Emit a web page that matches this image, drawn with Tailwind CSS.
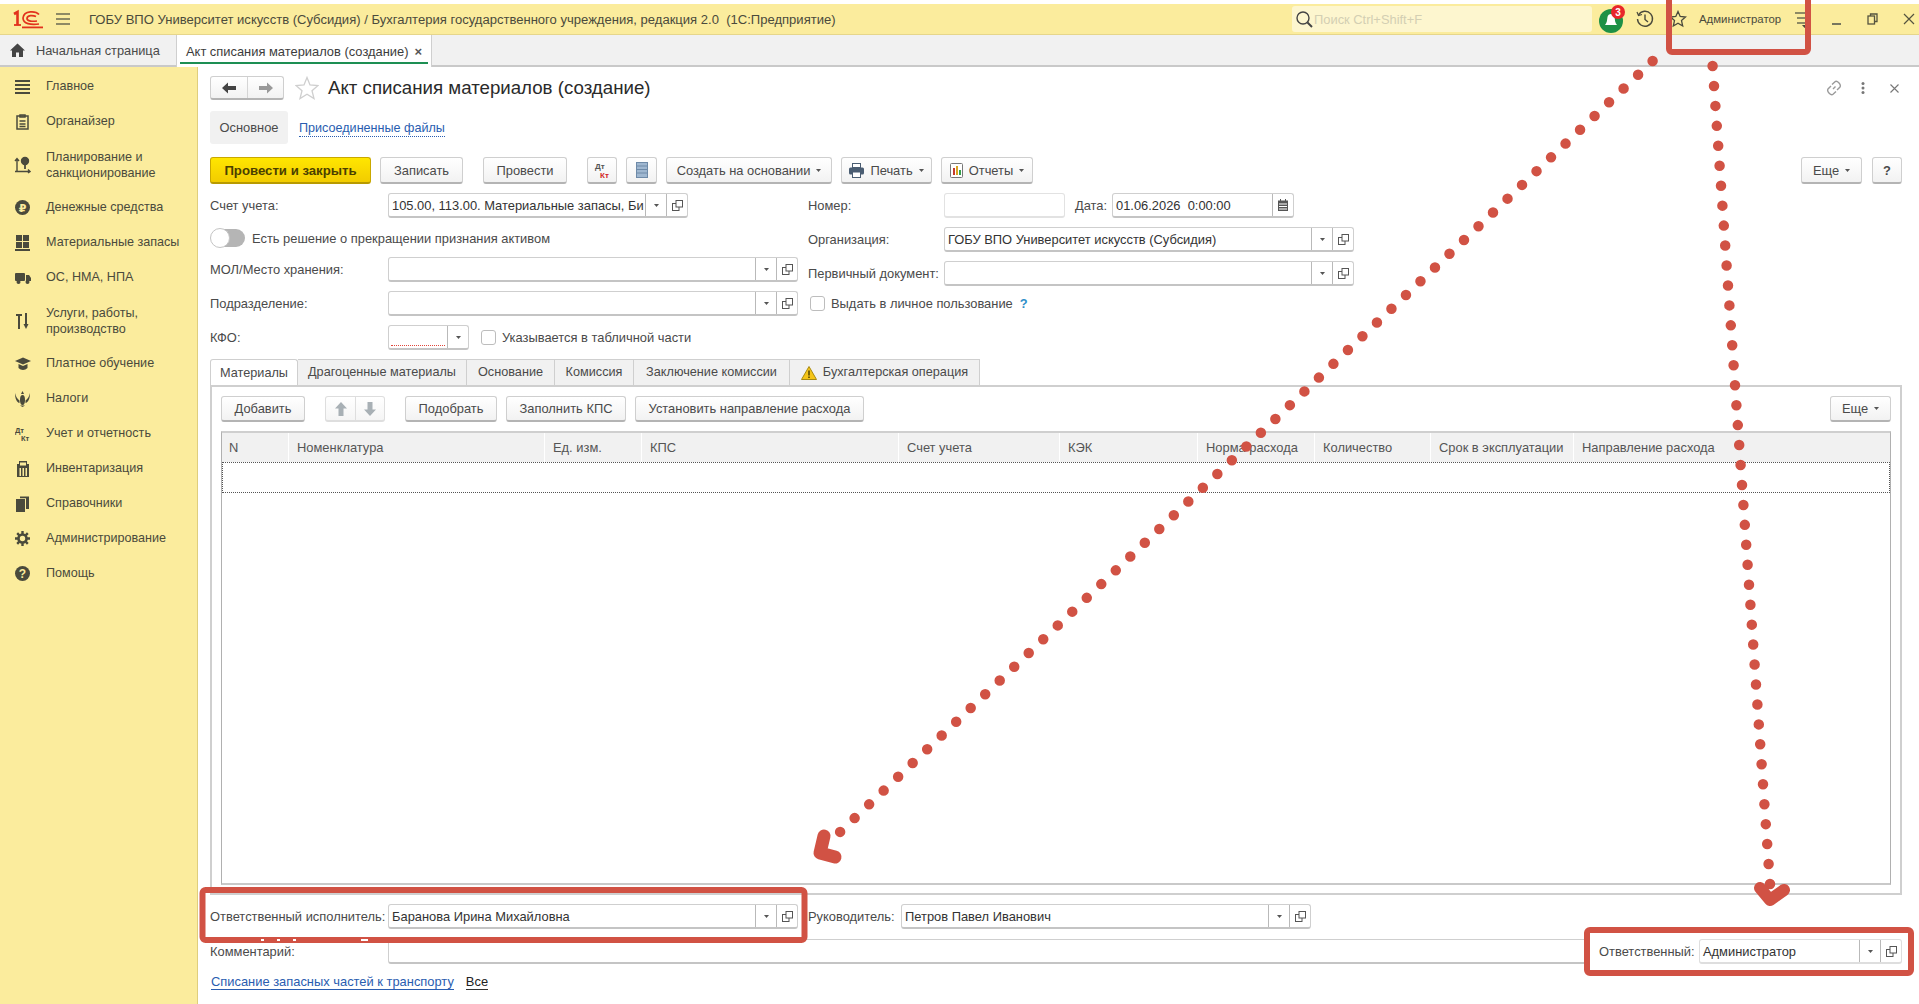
<!DOCTYPE html>
<html lang="ru"><head><meta charset="utf-8"><title>Акт списания материалов</title>
<script src="https://cdn.jsdelivr.net/npm/@tailwindcss/browser@4"></script></head>
<body class="m-0 bg-white">
<div class="relative flex h-[1004px] w-[1919px] flex-col overflow-hidden bg-white font-['Liberation_Sans',Arial,sans-serif] text-[12.9px] leading-[15px] text-[#4a4a4a]">
  <!-- top bar -->
  <div class="mt-[4px] flex h-[31px] shrink-0 items-center border-b border-[#e6d68b] bg-[#fbec9d] text-[#4a4a3c]">
    <svg class="ml-[13px] h-[20px] w-[30px]" viewBox="0 0 30 20" fill="none" stroke="#e2321d"><path d="M1 5 L4.5 3 V16" stroke-width="2.6"/><path d="M1 16 H8" stroke-width="1.8"/><path d="M26 5.5 C23 2 11 1 10 9 C10 15 18 16 26 15" stroke-width="1.7"/><path d="M23 7.5 C20 6 14 6 14 9.5 C14 12.5 20 12.5 24 12" stroke-width="1.7"/><path d="M9 18.4 H30" stroke-width="1.8"/></svg>
    <svg class="ml-[13px] h-[14px] w-[14px]" viewBox="0 0 14 14" stroke="#6b6a52" stroke-width="1.4"><path d="M0 2H14M0 7H14M0 12H14"/></svg>
    <span class="ml-[19px] w-[900px] text-[13.05px]">ГОБУ ВПО Университет искусств (Субсидия) / Бухгалтерия государственного учреждения, редакция 2.0&nbsp; (1С:Предприятие)</span>
    <div class="ml-[303px] flex h-[26px] w-[300px] items-center rounded-[3px] bg-[#fdf6cf]">
      <svg class="ml-[3px] h-[18px] w-[18px]" viewBox="0 0 18 18" fill="none" stroke="#444" stroke-width="1.4"><circle cx="8" cy="8" r="6"/><path d="M12.5 12.5L17 17" stroke-width="2"/></svg>
      <span class="ml-[1px] text-[#d3cfb3]">Поиск Ctrl+Shift+F</span>
    </div>
    <svg class="ml-[6px] h-[30px] w-[28px]" viewBox="0 0 28 30"><circle cx="13" cy="17" r="12" fill="#1d9146"/><path d="M7 21 C9 19 9 16 9.500 13 C10 9 16 9 16.500 13 C17 16 17 19 19 21 Z" fill="#fff"/><circle cx="20" cy="8" r="7" fill="#e8262a"/><text x="20" y="11.500" font-size="10" font-weight="700" fill="#fff" text-anchor="middle" font-family="Liberation Sans">3</text></svg>
    <svg class="ml-[10px] h-[18px] w-[18px]" viewBox="0 0 18 18" fill="none" stroke="#4a4a3c" stroke-width="1.4"><path d="M2.500 5 A7.500 7.500 0 1 1 1.500 9"/><path d="M1 2 L2.500 5.500 L6 4.500" stroke-width="1.2"/><path d="M9 4.500V9.500L12 12"/></svg>
    <svg class="ml-[15px] h-[18px] w-[18px]" viewBox="0 0 18 18" fill="none" stroke="#4a4a3c" stroke-width="1.3"><path d="M9 1.500L11.200 6.500L16.500 7L12.500 10.600L13.700 16L9 13.200L4.300 16L5.500 10.600L1.500 7L6.800 6.500Z"/></svg>
    <span class="ml-[12px] text-[11.4px]">Администратор</span>
    <svg class="ml-[13px] h-[18px] w-[14px]" viewBox="0 0 14 18" stroke="#6b6a52" stroke-width="1.4"><path d="M1 3H13M3 8H13M3 13H13"/><path d="M8 15H13L10.500 18Z" fill="#4a4a3c" stroke="none"/></svg>
    <span class="ml-[24px] mt-[9px] h-[2px] w-[9px] bg-[#77765e]"></span>
    <svg class="ml-[26px] h-[12px] w-[11px]" viewBox="0 0 11 12" fill="none" stroke="#55543f" stroke-width="1.300"><rect x="1" y="3" width="6.500" height="8"/><path d="M3.500 3V1H10V8.500H7.500"/></svg>
    <svg class="ml-[25px] h-[12px] w-[12px]" viewBox="0 0 12 12" stroke="#55543f" stroke-width="1.200"><path d="M1 1L11 11M11 1L1 11"/></svg>
  </div>
  <!-- open tabs -->
  <div class="flex h-[32px] shrink-0 border-b-2 border-[#c9c9c9] bg-[#f1f1f1]">
    <div class="flex w-[176px] items-center">
      <svg class="ml-[10px] h-[14px] w-[15px]" viewBox="0 0 15 14" fill="#444"><path d="M7.500 0.500L15 7.500H13V14H9V9.500H6V14H2V7.500H0Z"/></svg>
      <span class="ml-[11px] text-[12.8px]">Начальная страница</span>
    </div>
    <div class="relative flex h-[32px] w-[256px] items-center border-x border-[#cfcfcf] bg-white pl-[9px] text-[#3c3c3c]">
      <span>Акт списания материалов (создание)</span>
      <span class="ml-[6px] text-[13px] font-bold text-[#555]">×</span>
      <span class="absolute bottom-[3px] left-[3px] right-[3px] h-[2px] bg-[#1d8f53]"></span>
    </div>
  </div>
  <div class="flex min-h-0 flex-1">
    <!-- sidebar -->
    <aside class="w-[198px] shrink-0 border-r border-[#dfce7d] bg-[#fbec9d] pt-[2px] text-[12.6px] text-[#4a4a3c]">
      <div class="flex h-[35px] items-center"><div class="flex w-[46px] justify-center pr-[1px]"><svg class="h-[16px] w-[15px]" viewBox="0 0 15 16" stroke="#4a4a3c" stroke-width="2"><path d="M0 2H15M0 6H15M0 10H15M0 14H15"/></svg></div><span>Главное</span></div>
      <div class="flex h-[35px] items-center"><div class="flex w-[46px] justify-center pr-[1px]"><svg class="h-[16px] w-[13px]" viewBox="0 0 13 16" fill="none" stroke="#4a4a3c" stroke-width="1.500"><rect x="1" y="2" width="11" height="13"/><path d="M4 1H9V3H4ZM3.500 7H9.500M3.500 10H9.500M3.500 12.500H9.500"/></svg></div><span>Органайзер</span></div>
      <div class="flex h-[51px] items-center"><div class="flex w-[46px] justify-center pr-[1px]"><svg class="h-[18px] w-[17px]" viewBox="0 0 17 18" fill="none" stroke="#4a4a3c" stroke-width="1.400"><path d="M3 3V16M1 5L3 2.500L5 5M1 15.500H16M14 13.500L16 15.500L14 17"/><circle cx="11" cy="5" r="3.500" fill="#4a4a3c"/><path d="M11 8V13" stroke-width="1.800"/></svg></div><span class="leading-[16px]">Планирование и<br>санкционирование</span></div>
      <div class="flex h-[35px] items-center"><div class="flex w-[46px] justify-center pr-[1px]"><svg class="h-[15px] w-[15px]" viewBox="0 0 15 15"><circle cx="7.500" cy="7.500" r="7.500" fill="#4a4a3c"/><text x="7.500" y="11.500" font-size="11" font-weight="700" fill="#fbec9d" text-anchor="middle" font-family="DejaVu Sans">₽</text></svg></div><span>Денежные средства</span></div>
      <div class="flex h-[35px] items-center"><div class="flex w-[46px] justify-center pr-[1px]"><svg class="h-[16px] w-[15px]" viewBox="0 0 15 16" fill="#4a4a3c"><rect x="1" y="0" width="6" height="6"/><rect x="8" y="0" width="6" height="6"/><rect x="1" y="7" width="6" height="6"/><rect x="8" y="7" width="6" height="6"/><rect x="0" y="14" width="15" height="2"/></svg></div><span>Материальные запасы</span></div>
      <div class="flex h-[35px] items-center"><div class="flex w-[46px] justify-center pr-[1px]"><svg class="h-[12px] w-[16px]" viewBox="0 0 16 12" fill="#4a4a3c"><rect x="0" y="1" width="10" height="8" rx="1"/><path d="M11 3H14L16 6V9H11Z"/><circle cx="3.500" cy="10" r="2"/><circle cx="12.500" cy="10" r="2"/></svg></div><span>ОС, НМА, НПА</span></div>
      <div class="flex h-[51px] items-center"><div class="flex w-[46px] justify-center pr-[1px]"><svg class="h-[16px] w-[13px]" viewBox="0 0 13 16" fill="none" stroke="#4a4a3c" stroke-width="2"><path d="M0 2H6M3 2V16M10 0V12"/><path d="M7.500 11H12.500L10 16Z" fill="#4a4a3c" stroke="none"/></svg></div><span class="leading-[16px]">Услуги, работы,<br>производство</span></div>
      <div class="flex h-[35px] items-center"><div class="flex w-[46px] justify-center pr-[1px]"><svg class="h-[13px] w-[16px]" viewBox="0 0 16 13" fill="#4a4a3c"><path d="M0 4L8 0.500L16 4L8 7.500Z"/><path d="M3.500 7V11C6 13.500 10 13.500 12.500 11V7L8 9Z"/></svg></div><span>Платное обучение</span></div>
      <div class="flex h-[35px] items-center"><div class="flex w-[46px] justify-center pr-[1px]"><svg class="h-[16px] w-[15px]" viewBox="0 0 15 16" fill="#4a4a3c"><path d="M7.500 0L9 3H6Z"/><ellipse cx="7.500" cy="9" rx="2.500" ry="5"/><path d="M0 2C1 6 2.500 8 4.500 9.500V12C2 11.500 0 8 0 2ZM15 2C14 6 12.500 8 10.500 9.500V12C13 11.500 15 8 15 2Z"/><path d="M5 14.500H10L7.500 16Z"/></svg></div><span>Налоги</span></div>
      <div class="flex h-[35px] items-center"><div class="flex w-[46px] justify-center pr-[1px]"><svg class="h-[16px] w-[16px]" viewBox="0 0 16 16" fill="#4a4a3c" font-family="Liberation Sans" font-weight="700" font-size="7.500"><text x="0" y="7">Дт</text><text x="6" y="15">Кт</text></svg></div><span>Учет и отчетность</span></div>
      <div class="flex h-[35px] items-center"><div class="flex w-[46px] justify-center pr-[1px]"><svg class="h-[16px] w-[12px]" viewBox="0 0 12 16" fill="#4a4a3c"><path d="M2 0H10V3H12V16H0V3H2Z"/><rect x="3" y="1.500" width="6" height="3" fill="#fbec9d"/><path d="M2.500 7H4V15H2.500ZM5.500 7H7V15H5.500ZM8.500 7H10V15H8.500Z" fill="#fbec9d"/></svg></div><span>Инвентаризация</span></div>
      <div class="flex h-[35px] items-center"><div class="flex w-[46px] justify-center pr-[1px]"><svg class="h-[16px] w-[13px]" viewBox="0 0 13 16" fill="#4a4a3c"><path d="M0 3H9V16H0Z"/><path d="M4 0.500H13V13H10V2.200H4Z"/></svg></div><span>Справочники</span></div>
      <div class="flex h-[35px] items-center"><div class="flex w-[46px] justify-center pr-[1px]"><svg class="h-[15px] w-[15px]" viewBox="0 0 15 15" fill="none" stroke="#4a4a3c"><circle cx="7.500" cy="7.500" r="4" stroke-width="2.600"/><path d="M7.500 0V3M7.500 12V15M0 7.500H3M12 7.500H15M2.200 2.200L4.300 4.300M10.700 10.700L12.800 12.800M12.800 2.200L10.700 4.300M4.300 10.700L2.200 12.800" stroke-width="2.400"/></svg></div><span>Администрирование</span></div>
      <div class="flex h-[35px] items-center"><div class="flex w-[46px] justify-center pr-[1px]"><svg class="h-[15px] w-[15px]" viewBox="0 0 15 15"><circle cx="7.500" cy="7.500" r="7.500" fill="#4a4a3c"/><text x="7.500" y="12" font-size="12" font-weight="700" fill="#fbec9d" text-anchor="middle" font-family="Liberation Sans">?</text></svg></div><span>Помощь</span></div>
    </aside>
    <!-- main -->
    <main class="flex min-w-0 flex-1 flex-col pl-[12px] pr-[17px]">
      <div class="mt-[9px] flex h-[24px] items-center">
        <div class="flex h-[24px] w-[74px] rounded-[3px] border border-[#cfcfcf] border-b-2 border-b-[#b4b4b4] bg-gradient-to-b from-white to-[#f2f2f2]">
          <div class="flex w-[37px] items-center justify-center border-r border-[#d5d5d5]"><svg class="h-[12px] w-[14px]" viewBox="0 0 14 12" fill="#444"><path d="M0 6L6 0.500V4H14V8H6V11.500Z"/></svg></div>
          <div class="flex flex-1 items-center justify-center"><svg class="h-[12px] w-[14px]" viewBox="0 0 14 12" fill="#999"><path d="M14 6L8 0.500V4H0V8H8V11.500Z"/></svg></div>
        </div>
        <svg class="ml-[11px] h-[24px] w-[24px]" viewBox="0 0 24 24" fill="#fff" stroke="#cfcfcf" stroke-width="1.300"><path d="M12 1.500L15 9L23 9.500L17 14.700L19 22.500L12 18.200L5 22.500L7 14.700L1 9.500L9 9Z"/></svg>
        <span class="ml-[9px] text-[18.7px] leading-[22px] text-[#2a2a2a]">Акт списания материалов (создание)</span>
        <svg class="ml-auto mr-[1px] h-[16px] w-[16px]" viewBox="0 0 16 16" fill="none" stroke="#9a9a9a" stroke-width="1.400"><path d="M7 9L9.500 6.500M6 4.500L9 1.700C11 0 15.500 4.500 14 7L11 10M10 11.500L7 14.300C5 16 0.500 11.500 2 9L5 6"/></svg>
        <svg class="ml-[18px] h-[12px] w-[4px]" viewBox="0 0 4 12" fill="#777"><circle cx="2" cy="1.500" r="1.500"/><circle cx="2" cy="6" r="1.500"/><circle cx="2" cy="10.500" r="1.500"/></svg>
        <svg class="ml-[25px] mr-[3px] h-[9px] w-[9px]" viewBox="0 0 9 9" stroke="#777" stroke-width="1.100"><path d="M0.500 0.500L8.500 8.500M8.500 0.500L0.500 8.500"/></svg>
      </div>
      <div class="mt-[11px] flex h-[33px] items-center">
        <div class="flex h-[33px] w-[78px] items-center justify-center rounded-[3px] bg-[#f1f1f1]">Основное</div>
        <a class="ml-[11px] mt-[2px] border-b border-dotted border-[#2a5db0] text-[12.6px] text-[#2a5db0]">Присоединенные файлы</a>
      </div>
      <!-- command bar -->
      <div class="mt-[13px] flex h-[27px] items-stretch text-[#4a4a4a]">
        <button class="w-[161px] rounded-[3px] border border-[#c9a800] border-b-2 border-b-[#b89a00] bg-gradient-to-b from-[#ffe600] to-[#f2cc00] text-[13.2px] font-bold text-[#4a3f00]">Провести и закрыть</button>
        <button class="ml-[9px] w-[83px] rounded-[3px] border border-[#cfcfcf] border-b-2 border-b-[#b4b4b4] bg-gradient-to-b from-white to-[#f2f2f2]">Записать</button>
        <button class="ml-[20px] w-[84px] rounded-[3px] border border-[#cfcfcf] border-b-2 border-b-[#b4b4b4] bg-gradient-to-b from-white to-[#f2f2f2]">Провести</button>
        <button class="ml-[20px] flex w-[30px] items-center justify-center rounded-[3px] border border-[#cfcfcf] border-b-2 border-b-[#b4b4b4] bg-gradient-to-b from-white to-[#f2f2f2]"><svg class="h-[18px] w-[16px]" viewBox="0 0 16 18" font-family="Liberation Sans" font-size="8" font-weight="700"><text x="1" y="8" fill="#555">Дт</text><text x="6" y="17" fill="#d21f1f">Кт</text></svg></button>
        <button class="ml-[9px] flex w-[31px] items-center justify-center rounded-[3px] border border-[#cfcfcf] border-b-2 border-b-[#b4b4b4] bg-gradient-to-b from-white to-[#f2f2f2]"><svg class="h-[16px] w-[12px]" viewBox="0 0 12 16" fill="#9fb7d0" stroke="#6e8aa8"><rect x="0.500" y="0.500" width="11" height="15"/><path d="M0.500 4H11.500M0.500 7.500H11.500M0.500 11H11.500"/></svg></button>
        <button class="ml-[9px] flex w-[166px] items-center justify-center gap-[6px] rounded-[3px] border border-[#cfcfcf] border-b-2 border-b-[#b4b4b4] bg-gradient-to-b from-white to-[#f2f2f2]">Создать на основании<svg class="h-[3px] w-[5px]" viewBox="0 0 5 3" fill="#555"><path d="M0 0H5L2.500 3Z"/></svg></button>
        <button class="ml-[9px] flex w-[91px] items-center justify-center gap-[6px] rounded-[3px] border border-[#cfcfcf] border-b-2 border-b-[#b4b4b4] bg-gradient-to-b from-white to-[#f2f2f2]"><svg class="h-[15px] w-[15px]" viewBox="0 0 15 15" fill="#4a5d72"><rect x="3.500" y="0.500" width="8" height="4" fill="#fff" stroke="#4a5d72"/><rect x="0" y="4.500" width="15" height="7" rx="1.500"/><rect x="3.500" y="9" width="8" height="5.500" fill="#fff" stroke="#4a5d72"/></svg>Печать<svg class="h-[3px] w-[5px]" viewBox="0 0 5 3" fill="#555"><path d="M0 0H5L2.500 3Z"/></svg></button>
        <button class="ml-[9px] flex w-[92px] items-center justify-center gap-[6px] rounded-[3px] border border-[#cfcfcf] border-b-2 border-b-[#b4b4b4] bg-gradient-to-b from-white to-[#f2f2f2]"><svg class="h-[15px] w-[13px]" viewBox="0 0 13 15"><rect x="0.500" y="0.500" width="12" height="14" rx="1" fill="#fff" stroke="#777"/><rect x="3" y="5" width="2" height="7" fill="#c63a2e"/><rect x="6" y="3" width="2" height="9" fill="#d9a520"/><rect x="9" y="7" width="2" height="5" fill="#35a04c"/></svg>Отчеты<svg class="h-[3px] w-[5px]" viewBox="0 0 5 3" fill="#555"><path d="M0 0H5L2.500 3Z"/></svg></button>
        <button class="ml-auto flex w-[61px] items-center justify-center gap-[6px] rounded-[3px] border border-[#cfcfcf] border-b-2 border-b-[#b4b4b4] bg-gradient-to-b from-white to-[#f2f2f2]">Еще<svg class="h-[3px] w-[5px]" viewBox="0 0 5 3" fill="#555"><path d="M0 0H5L2.500 3Z"/></svg></button>
        <button class="ml-[10px] w-[30px] rounded-[3px] border border-[#cfcfcf] border-b-2 border-b-[#b4b4b4] bg-gradient-to-b from-white to-[#f2f2f2] font-bold">?</button>
      </div>
      <!-- form -->
      <div class="mt-[9px] flex h-[157px]">
        <div class="w-[588px]">
          <div class="flex h-[25px] items-center">
            <span class="w-[178px]">Счет учета:</span>
            <div class="flex h-[25px] w-[300px] items-center rounded-[3px] border border-[#cfcfcf] border-b-2 border-b-[#c4c4c4]">
              <span class="min-w-0 flex-1 overflow-hidden whitespace-nowrap pl-[3px] text-[#333]">105.00, 113.00. Материальные запасы, Би</span>
              <div class="flex h-full w-[21px] shrink-0 items-center justify-center border-l border-[#b9b9b9]"><svg class="h-[3px] w-[5px]" viewBox="0 0 5 3" fill="#555"><path d="M0 0H5L2.500 3Z"/></svg></div>
              <div class="flex h-full w-[21px] shrink-0 items-center justify-center border-l border-[#b9b9b9]"><svg class="h-[11px] w-[11px]" viewBox="0 0 11 11" fill="#fff" stroke="#555"><rect x="0.500" y="3.500" width="6.500" height="7"/><rect x="4" y="0.500" width="6.500" height="6.500"/></svg></div>
            </div>
          </div>
          <div class="mt-[10px] flex h-[20px] items-center">
            <div class="relative ml-[1px] h-[18px] w-[34px] rounded-full bg-[#b5b5b5]"><span class="absolute -left-[1px] -top-[1px] h-[20px] w-[20px] rounded-full border border-[#c4c4c4] bg-white"></span></div>
            <span class="ml-[7px]">Есть решение о прекращении признания активом</span>
          </div>
          <div class="mt-[9px] flex h-[25px] items-center">
            <span class="w-[178px]">МОЛ/Место хранения:</span>
            <div class="flex h-[25px] w-[410px] items-center rounded-[3px] border border-[#cfcfcf] border-b-2 border-b-[#c4c4c4]">
              <span class="flex-1"></span>
              <div class="flex h-full w-[21px] items-center justify-center border-l border-[#b9b9b9]"><svg class="h-[3px] w-[5px]" viewBox="0 0 5 3" fill="#555"><path d="M0 0H5L2.500 3Z"/></svg></div>
              <div class="flex h-full w-[21px] items-center justify-center border-l border-[#b9b9b9]"><svg class="h-[11px] w-[11px]" viewBox="0 0 11 11" fill="#fff" stroke="#555"><rect x="0.500" y="3.500" width="6.500" height="7"/><rect x="4" y="0.500" width="6.500" height="6.500"/></svg></div>
            </div>
          </div>
          <div class="mt-[9px] flex h-[25px] items-center">
            <span class="w-[178px]">Подразделение:</span>
            <div class="flex h-[25px] w-[410px] items-center rounded-[3px] border border-[#cfcfcf] border-b-2 border-b-[#c4c4c4]">
              <span class="flex-1"></span>
              <div class="flex h-full w-[21px] items-center justify-center border-l border-[#b9b9b9]"><svg class="h-[3px] w-[5px]" viewBox="0 0 5 3" fill="#555"><path d="M0 0H5L2.500 3Z"/></svg></div>
              <div class="flex h-full w-[21px] items-center justify-center border-l border-[#b9b9b9]"><svg class="h-[11px] w-[11px]" viewBox="0 0 11 11" fill="#fff" stroke="#555"><rect x="0.500" y="3.500" width="6.500" height="7"/><rect x="4" y="0.500" width="6.500" height="6.500"/></svg></div>
            </div>
          </div>
          <div class="mt-[9px] flex h-[25px] items-center">
            <span class="w-[178px]">КФО:</span>
            <div class="flex h-[25px] w-[81px] items-center rounded-[3px] border border-[#cfcfcf] border-b-2 border-b-[#c4c4c4]">
              <span class="mx-[2px] mt-[16px] h-[1px] flex-1 border-b border-dotted border-[#e0453a]"></span>
              <div class="flex h-full w-[21px] items-center justify-center border-l border-[#b9b9b9]"><svg class="h-[3px] w-[5px]" viewBox="0 0 5 3" fill="#555"><path d="M0 0H5L2.500 3Z"/></svg></div>
            </div>
            <span class="ml-[12px] h-[15px] w-[15px] rounded-[3px] border border-[#bdbdbd]"></span>
            <span class="ml-[6px]">Указывается в табличной части</span>
          </div>
        </div>
        <div class="ml-[10px] flex-1">
          <div class="flex h-[25px] items-center">
            <span class="w-[136px]">Номер:</span>
            <span class="h-[25px] w-[121px] rounded-[3px] border border-[#e2e2e2] border-b-2"></span>
            <span class="ml-[10px] w-[37px]">Дата:</span>
            <div class="flex h-[25px] w-[182px] items-center rounded-[3px] border border-[#cfcfcf] border-b-2 border-b-[#c4c4c4]">
              <span class="flex-1 whitespace-pre pl-[3px] text-[#333]">01.06.2026  0:00:00</span>
              <div class="flex h-full w-[21px] items-center justify-center border-l border-[#b9b9b9]"><svg class="h-[12px] w-[10px]" viewBox="0 0 10 12" fill="#555"><path d="M0 1.500H2V0H3V1.500H7V0H8V1.500H10V12H0Z"/><path d="M1 4.500H9V5.500H1ZM1 7H9V8H1ZM1 9.500H9V10.500H1Z" fill="#fff"/></svg></div>
            </div>
          </div>
          <div class="mt-[9px] flex h-[25px] items-center">
            <span class="w-[136px]">Организация:</span>
            <div class="flex h-[25px] w-[410px] items-center rounded-[3px] border border-[#cfcfcf] border-b-2 border-b-[#c4c4c4]">
              <span class="flex-1 pl-[3px] text-[#333]">ГОБУ ВПО Университет искусств (Субсидия)</span>
              <div class="flex h-full w-[21px] items-center justify-center border-l border-[#b9b9b9]"><svg class="h-[3px] w-[5px]" viewBox="0 0 5 3" fill="#555"><path d="M0 0H5L2.500 3Z"/></svg></div>
              <div class="flex h-full w-[21px] items-center justify-center border-l border-[#b9b9b9]"><svg class="h-[11px] w-[11px]" viewBox="0 0 11 11" fill="#fff" stroke="#555"><rect x="0.500" y="3.500" width="6.500" height="7"/><rect x="4" y="0.500" width="6.500" height="6.500"/></svg></div>
            </div>
          </div>
          <div class="mt-[9px] flex h-[25px] items-center">
            <span class="w-[136px]">Первичный документ:</span>
            <div class="flex h-[25px] w-[410px] items-center rounded-[3px] border border-[#cfcfcf] border-b-2 border-b-[#c4c4c4]">
              <span class="flex-1"></span>
              <div class="flex h-full w-[21px] items-center justify-center border-l border-[#b9b9b9]"><svg class="h-[3px] w-[5px]" viewBox="0 0 5 3" fill="#555"><path d="M0 0H5L2.500 3Z"/></svg></div>
              <div class="flex h-full w-[21px] items-center justify-center border-l border-[#b9b9b9]"><svg class="h-[11px] w-[11px]" viewBox="0 0 11 11" fill="#fff" stroke="#555"><rect x="0.500" y="3.500" width="6.500" height="7"/><rect x="4" y="0.500" width="6.500" height="6.500"/></svg></div>
            </div>
          </div>
          <div class="mt-[10px] flex h-[15px] items-center">
            <span class="ml-[2px] h-[15px] w-[15px] rounded-[3px] border border-[#bdbdbd]"></span>
            <span class="ml-[6px]">Выдать в личное пользование</span>
            <span class="ml-[7px] font-bold text-[#2f8fc9]">?</span>
          </div>
        </div>
      </div>
      <!-- form tabs -->
      <div class="mt-[9px] flex h-[28px] text-[12.7px] text-[#4a4a4a]">
        <div class="flex w-[88px] items-center justify-center rounded-t-[3px] border border-b-0 border-[#cfcfcf] bg-white">Материалы</div>
        <div class="flex w-[169px] items-center justify-center border border-[#cfcfcf] border-b-2 border-b-[#c9c9c9] border-l-0 bg-[#f1f1f1]">Драгоценные материалы</div>
        <div class="flex w-[88px] items-center justify-center border border-[#cfcfcf] border-b-2 border-b-[#c9c9c9] border-l-0 bg-[#f1f1f1]">Основание</div>
        <div class="flex w-[79px] items-center justify-center border border-[#cfcfcf] border-b-2 border-b-[#c9c9c9] border-l-0 bg-[#f1f1f1]">Комиссия</div>
        <div class="flex w-[156px] items-center justify-center border border-[#cfcfcf] border-b-2 border-b-[#c9c9c9] border-l-0 bg-[#f1f1f1]">Заключение комиссии</div>
        <div class="flex w-[190px] items-center justify-center gap-[6px] border border-[#cfcfcf] border-b-2 border-b-[#c9c9c9] border-l-0 bg-[#f1f1f1]"><svg class="h-[14px] w-[16px]" viewBox="0 0 16 14"><path d="M8 0.500L15.500 13.500H0.500Z" fill="#f5c518" stroke="#a88a10"/><path d="M7.200 4.500H8.800V9.500H7.200ZM7.200 10.500H8.800V12H7.200Z" fill="#5a4a00"/></svg>Бухгалтерская операция</div>
      </div>
      <!-- tab panel -->
      <div class="-mt-[2px] flex h-[510px] flex-col border-2 border-[#cfcfcf] px-[9px]">
        <div class="mt-[9px] flex h-[26px] shrink-0 items-stretch">
          <button class="w-[84px] rounded-[3px] border border-[#cfcfcf] border-b-2 border-b-[#b4b4b4] bg-gradient-to-b from-white to-[#f2f2f2]">Добавить</button>
          <div class="ml-[20px] flex w-[60px] rounded-[3px] border border-[#dedede] border-b-2 bg-gradient-to-b from-white to-[#f5f5f5]">
            <div class="flex w-[30px] items-center justify-center border-r border-[#dedede]"><svg class="h-[14px] w-[12px]" viewBox="0 0 12 14" fill="#a8b0b5"><path d="M6 0L12 6.500H8.500V14H3.500V6.500H0Z"/></svg></div>
            <div class="flex flex-1 items-center justify-center"><svg class="h-[14px] w-[12px]" viewBox="0 0 12 14" fill="#a8b0b5"><path d="M6 14L12 7.500H8.500V0H3.500V7.500H0Z"/></svg></div>
          </div>
          <button class="ml-[20px] w-[92px] rounded-[3px] border border-[#cfcfcf] border-b-2 border-b-[#b4b4b4] bg-gradient-to-b from-white to-[#f2f2f2]">Подобрать</button>
          <button class="ml-[9px] w-[120px] rounded-[3px] border border-[#cfcfcf] border-b-2 border-b-[#b4b4b4] bg-gradient-to-b from-white to-[#f2f2f2]">Заполнить КПС</button>
          <button class="ml-[9px] w-[229px] rounded-[3px] border border-[#cfcfcf] border-b-2 border-b-[#b4b4b4] bg-gradient-to-b from-white to-[#f2f2f2]">Установить направление расхода</button>
          <button class="ml-auto flex w-[61px] items-center justify-center gap-[6px] rounded-[3px] border border-[#cfcfcf] border-b-2 border-b-[#b4b4b4] bg-gradient-to-b from-white to-[#f2f2f2]">Еще<svg class="h-[3px] w-[5px]" viewBox="0 0 5 3" fill="#555"><path d="M0 0H5L2.500 3Z"/></svg></button>
        </div>
        <div class="mt-[9px] flex h-[454px] flex-col border border-b-2 border-t-2 border-[#b0b0b0] border-b-[#c9c9c9] border-t-[#cfcfcf]">
          <div class="flex h-[29px] shrink-0 bg-[#f1f1f1] text-[#555]">
            <div class="flex w-[67px] items-center border-r border-white pl-[7px]">N</div>
            <div class="flex w-[256px] items-center border-r border-white pl-[8px]">Номенклатура</div>
            <div class="flex w-[97px] items-center border-r border-white pl-[8px]">Ед. изм.</div>
            <div class="flex w-[257px] items-center border-r border-white pl-[8px]">КПС</div>
            <div class="flex w-[161px] items-center border-r border-white pl-[8px]">Счет учета</div>
            <div class="flex w-[138px] items-center border-r border-white pl-[8px]">КЭК</div>
            <div class="flex w-[117px] items-center border-r border-white pl-[8px]">Норма расхода</div>
            <div class="flex w-[116px] items-center border-r border-white pl-[8px]">Количество</div>
            <div class="flex w-[143px] items-center border-r border-white pl-[8px]">Срок в эксплуатации</div>
            <div class="flex flex-1 items-center pl-[8px]">Направление расхода</div>
          </div>
          <div class="h-[31px] shrink-0 border border-dotted border-[#555]"></div>
        </div>
      </div>
      <!-- footer fields -->
      <div class="mt-[9px] flex h-[25px] items-center">
        <span class="w-[178px] whitespace-nowrap">Ответственный исполнитель:</span>
        <div class="flex h-[25px] w-[410px] items-center rounded-[3px] border border-[#cfcfcf] border-b-2 border-b-[#c4c4c4]">
          <span class="flex-1 pl-[3px] text-[#333]">Баранова Ирина Михайловна</span>
          <div class="flex h-full w-[21px] items-center justify-center border-l border-[#b9b9b9]"><svg class="h-[3px] w-[5px]" viewBox="0 0 5 3" fill="#555"><path d="M0 0H5L2.500 3Z"/></svg></div>
          <div class="flex h-full w-[21px] items-center justify-center border-l border-[#b9b9b9]"><svg class="h-[11px] w-[11px]" viewBox="0 0 11 11" fill="#fff" stroke="#555"><rect x="0.500" y="3.500" width="6.500" height="7"/><rect x="4" y="0.500" width="6.500" height="6.500"/></svg></div>
        </div>
        <span class="ml-[10px] w-[93px]">Руководитель:</span>
        <div class="flex h-[25px] w-[410px] items-center rounded-[3px] border border-[#cfcfcf] border-b-2 border-b-[#c4c4c4]">
          <span class="flex-1 pl-[3px] text-[#333]">Петров Павел Иванович</span>
          <div class="flex h-full w-[21px] items-center justify-center border-l border-[#b9b9b9]"><svg class="h-[3px] w-[5px]" viewBox="0 0 5 3" fill="#555"><path d="M0 0H5L2.500 3Z"/></svg></div>
          <div class="flex h-full w-[21px] items-center justify-center border-l border-[#b9b9b9]"><svg class="h-[11px] w-[11px]" viewBox="0 0 11 11" fill="#fff" stroke="#555"><rect x="0.500" y="3.500" width="6.500" height="7"/><rect x="4" y="0.500" width="6.500" height="6.500"/></svg></div>
        </div>
      </div>
      <div class="mt-[10px] flex h-[25px] items-center">
        <span class="w-[178px]">Комментарий:</span>
        <span class="h-[25px] flex-1 rounded-[3px] border border-[#cfcfcf] border-b-2 border-b-[#c4c4c4]"></span>
        <span class="ml-[9px] w-[100px]">Ответственный:</span>
        <div class="flex h-[25px] w-[203px] items-center rounded-[3px] border border-[#dedede] border-b-2">
          <span class="flex-1 pl-[3px] text-[#333]">Администратор</span>
          <div class="flex h-full w-[21px] items-center justify-center border-l border-[#b9b9b9]"><svg class="h-[3px] w-[5px]" viewBox="0 0 5 3" fill="#555"><path d="M0 0H5L2.500 3Z"/></svg></div>
          <div class="flex h-full w-[21px] items-center justify-center border-l border-[#b9b9b9]"><svg class="h-[11px] w-[11px]" viewBox="0 0 11 11" fill="#fff" stroke="#555"><rect x="0.500" y="3.500" width="6.500" height="7"/><rect x="4" y="0.500" width="6.500" height="6.500"/></svg></div>
        </div>
      </div>
      <div class="mt-[10px] flex items-center pl-[1px]">
        <a class="border-b border-[#2a5db0] text-[#2a5db0]">Списание запасных частей к транспорту</a>
        <a class="ml-[12px] border-b border-[#333] text-[#222]">Все</a>
      </div>
    </main>
  </div>
  <!-- annotations drawn over the screenshot -->
  <svg class="pointer-events-none absolute left-0 top-0 h-[1004px] w-[1919px]" viewBox="0 0 1919 1004" fill="none">
    <rect x="1669" y="-3" width="139" height="55" rx="3" stroke="#d15244" stroke-width="6"/>
    <rect x="202.500" y="890" width="602" height="50" rx="3" stroke="#d15244" stroke-width="6"/>
    <rect x="1587" y="930" width="324" height="43" rx="3" stroke="#d15244" stroke-width="6"/>
    <line x1="1652.600" y1="61" x2="840" y2="832" stroke="#d15244" stroke-width="10.500" stroke-linecap="round" stroke-dasharray="0 20"/>
    <line x1="1712.600" y1="66" x2="1770" y2="884" stroke="#d15244" stroke-width="10.500" stroke-linecap="round" stroke-dasharray="0 20"/>
    <path d="M824 836L820 853L835 857" stroke="#d15244" stroke-width="13" stroke-linecap="round" stroke-linejoin="round"/>
    <path d="M1760 888L1770 900L1784 890" stroke="#d15244" stroke-width="12" stroke-linecap="round" stroke-linejoin="round"/>
    <path d="M261 940H264M277 940H280M293 940H296M361 940H368" stroke="#fff" stroke-width="2"/>
  </svg>
</div>
</body></html>
